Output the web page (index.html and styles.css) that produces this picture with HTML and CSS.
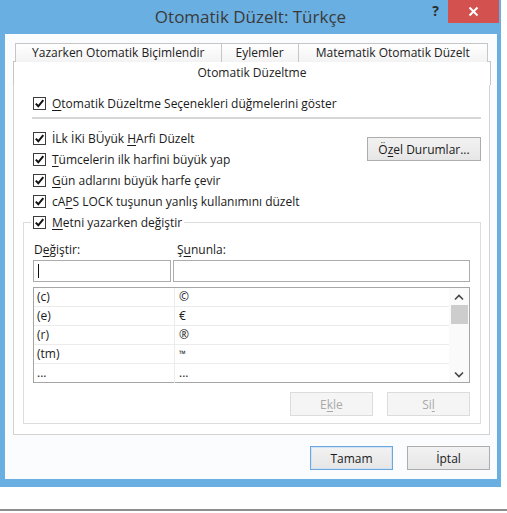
FILE: index.html
```html
<!DOCTYPE html>
<html>
<head>
  <meta charset="UTF-8">
  <title>Otomatik Düzelt: Türkçe</title>
  <link rel="stylesheet" href="styles.css">
</head>
<body>
  <div class="window">
    <div class="titlebar">
      <span></span>
      <h1 class="title">Otomatik Düzelt: Türkçe</h1>
      <div class="controls">
        <span class="help">?</span>
        <span class="close">
          <svg width="11" height="11" viewBox="0 0 11 11"><path d="M1.5 1.5 L9.5 9.5 M9.5 1.5 L1.5 9.5" stroke="#fff" stroke-width="2" fill="none"/></svg>
        </span>
      </div>
    </div>

    <div class="client">
      <div class="tabs">
        <div class="tab-row">
          <div class="tab">Yazarken Otomatik Biçimlendir</div>
          <div class="tab">Eylemler</div>
          <div class="tab">Matematik Otomatik Düzelt</div>
        </div>
        <div class="tab tab-active">Otomatik Düzeltme</div>
      </div>

      <div class="panel">
        <label class="check top-check">
          <span class="box"><svg width="11" height="11" viewBox="0 0 11 11"><path d="M1.8 5.6 L4.3 8.3 L9.3 2.2" stroke="#111" stroke-width="2" fill="none"/></svg></span>
          <span><u>O</u>tomatik Düzeltme Seçenekleri düğmelerini göster</span>
        </label>
        <div class="sep"></div>

        <div class="options">
          <div class="option-list">
            <label class="check">
              <span class="box"><svg width="11" height="11" viewBox="0 0 11 11"><path d="M1.8 5.6 L4.3 8.3 L9.3 2.2" stroke="#111" stroke-width="2" fill="none"/></svg></span>
              <span>İLk İKi BÜyük <u>H</u>Arfi Düzelt</span>
            </label>
            <label class="check">
              <span class="box"><svg width="11" height="11" viewBox="0 0 11 11"><path d="M1.8 5.6 L4.3 8.3 L9.3 2.2" stroke="#111" stroke-width="2" fill="none"/></svg></span>
              <span><u>T</u>ümcelerin ilk harfini büyük yap</span>
            </label>
            <label class="check">
              <span class="box"><svg width="11" height="11" viewBox="0 0 11 11"><path d="M1.8 5.6 L4.3 8.3 L9.3 2.2" stroke="#111" stroke-width="2" fill="none"/></svg></span>
              <span><u>G</u>ün adlarını büyük harfe çevir</span>
            </label>
            <label class="check">
              <span class="box"><svg width="11" height="11" viewBox="0 0 11 11"><path d="M1.8 5.6 L4.3 8.3 L9.3 2.2" stroke="#111" stroke-width="2" fill="none"/></svg></span>
              <span>cA<u>P</u>S LOCK tuşunun yanlış kullanımını düzelt</span>
            </label>
          </div>
          <button class="btn btn-special">Ö<u>z</u>el Durumlar...</button>
        </div>

        <fieldset class="replace">
          <legend>
            <label class="check">
              <span class="box"><svg width="11" height="11" viewBox="0 0 11 11"><path d="M1.8 5.6 L4.3 8.3 L9.3 2.2" stroke="#111" stroke-width="2" fill="none"/></svg></span>
              <span><u>M</u>etni yazarken değiştir</span>
            </label>
          </legend>

          <div class="fields">
            <span class="field-label">D<u>e</u>ğiştir:</span>
            <span class="field-label field-label-right">Ş<u>u</u>nunla:</span>
            <div class="input"><span class="caret"></span></div>
            <div class="input"></div>
          </div>

          <div class="list">
            <div class="list-body">
              <div class="row"><span class="cell-key">(c)</span><span class="cell-val">©</span></div>
              <div class="row"><span class="cell-key">(e)</span><span class="cell-val">€</span></div>
              <div class="row"><span class="cell-key">(r)</span><span class="cell-val">®</span></div>
              <div class="row"><span class="cell-key">(tm)</span><span class="cell-val tm">™</span></div>
              <div class="row"><span class="cell-key">...</span><span class="cell-val">...</span></div>
            </div>
            <div class="scrollbar">
              <svg width="10" height="7" viewBox="0 0 10 7"><path d="M1 5.5 L5 1.5 L9 5.5" stroke="#444" stroke-width="1.6" fill="none"/></svg>
              <div class="thumb"></div>
              <div class="track"></div>
              <svg width="10" height="7" viewBox="0 0 10 7"><path d="M1 1.5 L5 5.5 L9 1.5" stroke="#444" stroke-width="1.6" fill="none"/></svg>
            </div>
          </div>

          <div class="list-actions">
            <button class="btn" disabled>E<u>k</u>le</button>
            <button class="btn" disabled>Si<u>l</u></button>
          </div>
        </fieldset>
      </div>

      <div class="dialog-actions">
        <button class="btn btn-default">Tamam</button>
        <button class="btn">İptal</button>
      </div>
    </div>
  </div>
  <div class="page-rule"></div>
</body>
</html>
```

FILE: styles.css
```css
:root {
  --frame: #6aafe1;
  --close: #d3514f;
  --text: #1a1a1a;
  --border: #d2d2d2;
  --field-border: #acacac;
  --row-line: #ececec;
}

* {
  box-sizing: border-box;
  margin: 0;
  padding: 0;
}

body {
  font-family: 'Open Sans', 'Noto Sans', sans-serif;
  font-size: 12px;
  color: var(--text);
  background: #ffffff;
}

u {
  text-decoration-thickness: 1px;
  text-underline-offset: 2px;
}

.window {
  width: 501px;
  background: var(--frame);
  padding-bottom: 8px;
}

.titlebar {
  height: 34px;
  display: grid;
  grid-template-columns: 1fr auto 1fr;
}

.title {
  font-size: 17px;
  font-weight: 400;
  color: #3a3a3a;
  line-height: 34px;
}

.controls {
  justify-self: end;
  display: flex;
  align-items: flex-start;
  margin-right: 2px;
}

.help {
  font-size: 14px;
  font-weight: 700;
  color: #2d2d2d;
  line-height: 22px;
  margin-right: 9px;
}

.close {
  width: 51px;
  height: 23px;
  background: var(--close);
  display: flex;
  align-items: center;
  justify-content: center;
}

.client {
  margin: 0 4px 0 5px;
  background: #fafcfe;
  padding: 9px 7px 9px 8px;
}

/* tabs */

.tab-row {
  display: flex;
  margin-left: 2px;
  height: 19px;
}

.tab {
  border: 1px solid #c6c6c6;
  border-bottom: none;
  background: linear-gradient(#ffffff, #f3f3f3);
  padding: 0 16px;
  line-height: 18px;
  white-space: nowrap;
  color: #222;
}

.tab + .tab {
  margin-left: -1px;
}

.tab-row .tab:nth-child(2) {
  padding: 0 14px;
}

.tab-row .tab:nth-child(3) {
  padding: 0 17px;
}

.tab-active {
  margin-top: -1px;
  height: 24px;
  line-height: 22px;
  text-align: center;
  background: #ffffff;
  margin-right: -1px;
}

/* panel */

.panel {
  background: #ffffff;
  border: 1px solid var(--border);
  border-top: none;
  padding: 8px 8px 10px 19px;
}

.check {
  display: flex;
  align-items: center;
  gap: 6px;
  height: 21px;
  white-space: nowrap;
}

.box {
  width: 13px;
  height: 13px;
  border: 1px solid #3c3c3c;
  background: #fff;
  display: flex;
  align-items: center;
  justify-content: center;
  flex: none;
}

.top-check {
  height: 20px;
}

.sep {
  height: 2px;
  background: #d6d6d6;
  margin: 4px 0 0 -1px;
}

.options {
  display: flex;
  justify-content: space-between;
  align-items: flex-start;
  margin-top: 9px;
}

.btn {
  font-family: inherit;
  font-size: 12px;
  color: var(--text);
  width: 83px;
  height: 24px;
  border: 1px solid #adadad;
  background: linear-gradient(#f2f2f2, #e6e6e6);
}

.btn-special {
  width: 114px;
  margin-top: 9px;
}

.btn:disabled {
  color: #a9a9a9;
  border-color: #dcdcdc;
  background: #f5f5f5;
}

.btn-default {
  border-color: #6ea6dc;
  box-shadow: inset 0 0 0 1px #cfe4f7;
}

/* replace group */

.replace {
  margin: 0 0 0 -10px;
  border: 1px solid #dcdcdc;
  padding: 0 10px 7px 9px;
}

.replace legend {
  margin-left: -2px;
  padding: 0 2px;
}

.fields {
  display: grid;
  grid-template-columns: 138px 1fr;
  grid-template-rows: 18px 22px;
  column-gap: 2px;
  row-gap: 1px;
  margin-top: 8px;
}

.field-label {
  line-height: 18px;
  padding-left: 1px;
}

.field-label-right {
  padding-left: 4px;
}

.input {
  border: 1px solid var(--field-border);
  background: #fff;
  padding: 3px 4px;
}

.caret {
  display: block;
  width: 1px;
  height: 14px;
  background: #111;
}

.list {
  display: flex;
  margin-top: 5px;
  height: 96px;
  border: 1px solid #a6a6a6;
  background: #fff;
}

.list-body {
  flex: 1;
}

.row {
  display: flex;
  height: 19px;
  border-bottom: 1px solid var(--row-line);
  line-height: 18px;
}

.row:last-child {
  border-bottom: none;
}

.cell-key {
  width: 141px;
  padding-left: 3px;
  border-right: 1px solid var(--row-line);
}

.cell-val {
  padding-left: 4px;
}

.tm {
  font-size: 9px;
}

.scrollbar {
  width: 20px;
  background: #fafafa;
  display: flex;
  flex-direction: column;
  align-items: center;
  padding: 6px 1px 4px;
}

.thumb {
  width: 17px;
  height: 19px;
  background: #cdcdcd;
  margin-top: 4px;
}

.track {
  flex: 1;
}

.list-actions {
  display: flex;
  justify-content: flex-end;
  gap: 14px;
  margin-top: 9px;
}

.dialog-actions {
  display: flex;
  justify-content: flex-end;
  gap: 14px;
  margin-top: 11px;
}

.page-rule {
  margin-top: 22px;
  height: 2px;
  background: #8f8f8f;
}
```
